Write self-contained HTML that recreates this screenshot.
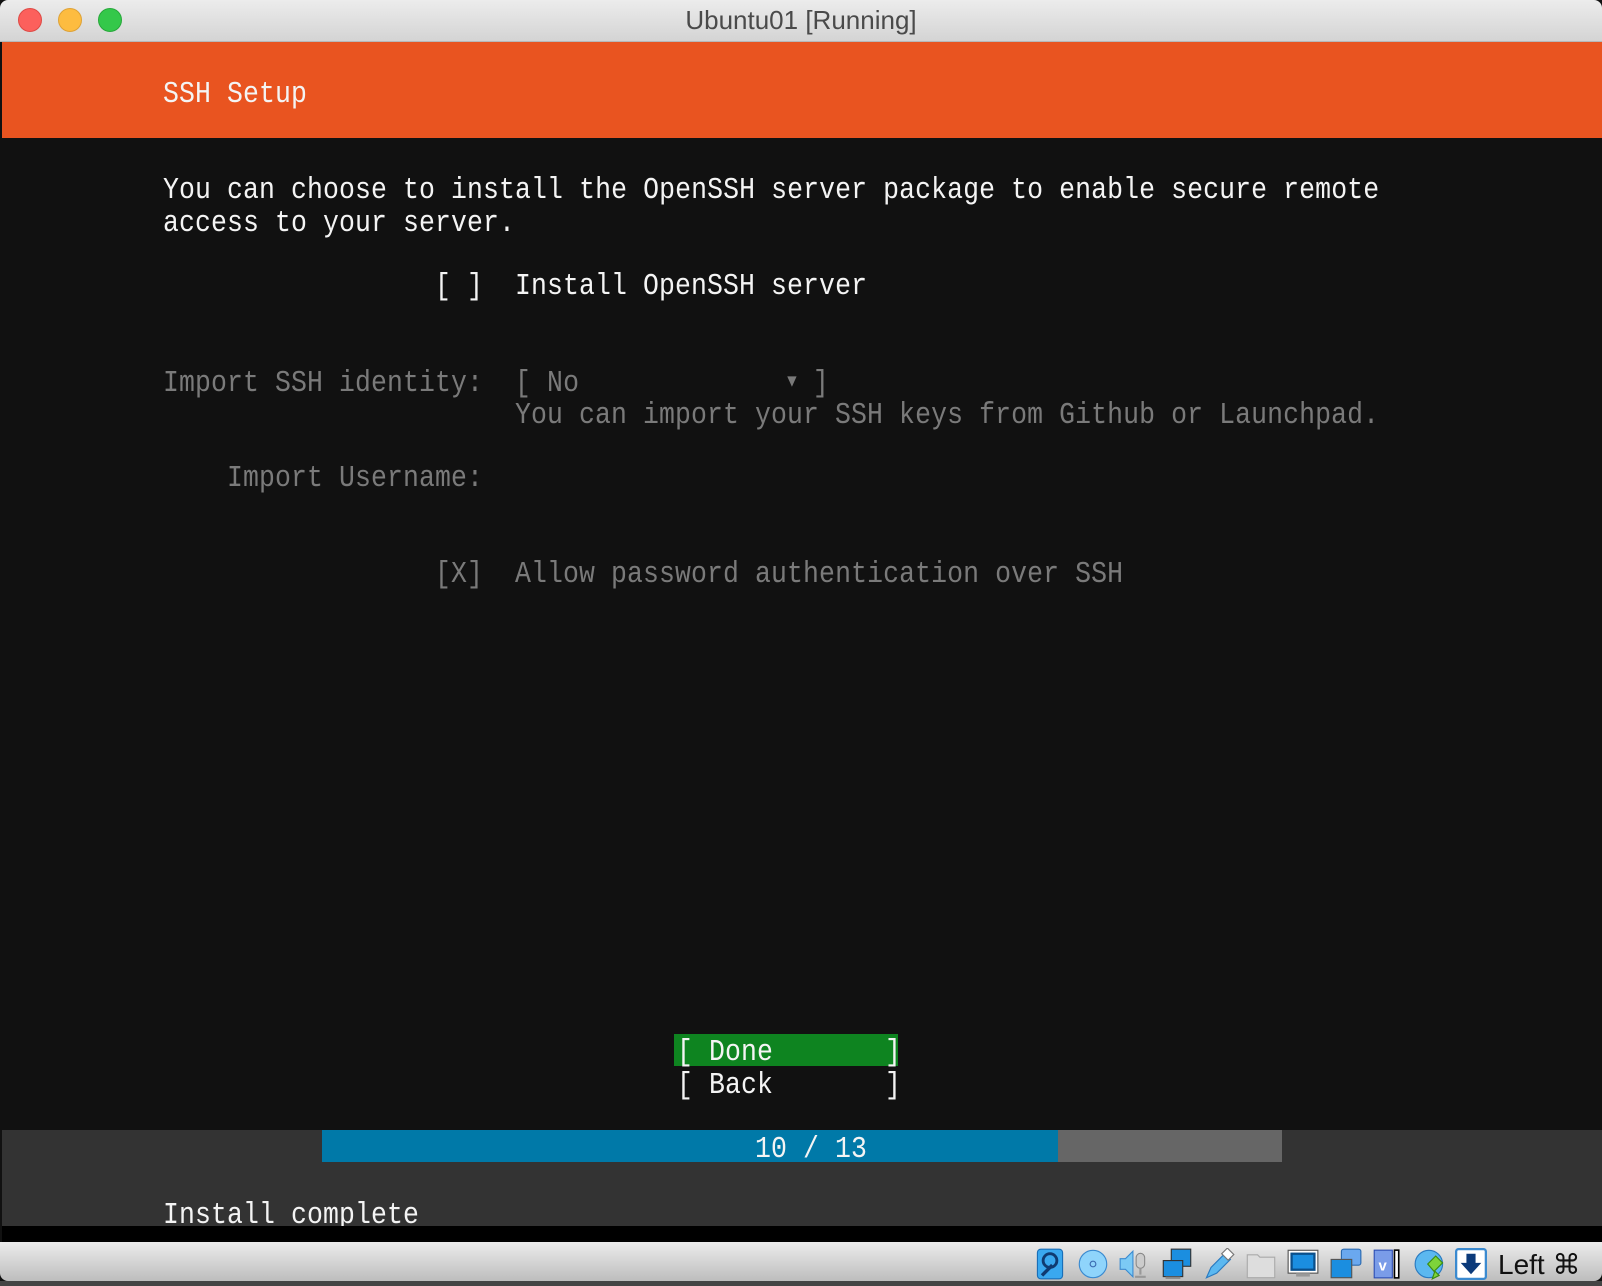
<!DOCTYPE html>
<html><head><meta charset="utf-8"><style>
*{margin:0;padding:0;box-sizing:border-box}
html,body{width:1602px;height:1286px;overflow:hidden;background:#fff}
#win{position:absolute;left:0;top:0;width:1602px;height:1286px;background:#111}
#title{position:absolute;left:0;top:0;width:1602px;height:42px;background:linear-gradient(#ececec,#d4d4d4);border-bottom:1px solid #b8b8b8;border-radius:8px 8px 0 0}
#title .t{position:absolute;left:0;width:1602px;top:5px;text-align:center;font:26px "Liberation Sans",sans-serif;color:#4a4a4a}
.dot{position:absolute;top:8px;width:24px;height:24px;border-radius:50%}
#orange{position:absolute;left:2px;top:42px;width:1600px;height:96px;background:#e95420}
.l{position:absolute;font-family:"Liberation Mono",monospace;font-size:26.5px;letter-spacing:0.1px;white-space:pre;line-height:32px;height:32px;transform:scaleY(1.15);color:#f4f4f4}
.g{color:#7a7a7a}
#bot{position:absolute;left:2px;top:1130px;width:1600px;height:96px;background:#333}
#blk{position:absolute;left:2px;top:1226px;width:1600px;height:16px;background:#000}
#status{position:absolute;left:0;top:1242px;width:1602px;height:39px;background:linear-gradient(#ececec,#bdbdbd);border-radius:0 0 8px 8px}
#strip{position:absolute;left:0;top:1281px;width:1602px;height:5px;background:#444}
.ic{position:absolute;top:1248px;width:32px;height:32px}
</style></head><body>
<div id="win">
<div id="title"><div class="t">Ubuntu01 [Running]</div>
<div class="dot" style="left:18px;background:#fc605c;border:1px solid #de4a45"></div>
<div class="dot" style="left:58px;background:#fdbc40;border:1px solid #dea236"></div>
<div class="dot" style="left:98px;background:#34c84a;border:1px solid #27a83a"></div>
</div>
<div id="orange"></div>
<div class="l" style="left:163px;top:78px">SSH Setup</div>
<div class="l" style="left:163px;top:174px">You can choose to install the OpenSSH server package to enable secure remote</div>
<div class="l" style="left:163px;top:207px">access to your server.</div>
<div class="l" style="left:435px;top:270px">[ ]  Install OpenSSH server</div>
<div class="l g" style="left:163px;top:366px">Import SSH identity:  [ No             <span style="font-size:16px;vertical-align:4px">▼</span> ]</div>
<div class="l g" style="left:515px;top:399px">You can import your SSH keys from Github or Launchpad.</div>
<div class="l g" style="left:227px;top:462px">Import Username:</div>
<div class="l g" style="left:435px;top:558px">[X]  Allow password authentication over SSH</div>
<div style="position:absolute;left:674px;top:1034px;width:224px;height:32px;background:#0e8420"></div>
<div class="l" style="left:677px;top:1036px">[ Done       ]</div>
<div class="l" style="left:677px;top:1069px">[ Back       ]</div>
<div id="bot"></div>
<div style="position:absolute;left:322px;top:1130px;width:736px;height:32px;background:#0079a8"></div>
<div style="position:absolute;left:1058px;top:1130px;width:224px;height:32px;background:#666"></div>
<div class="l" style="left:755px;top:1133px">10 / 13</div>
<div class="l" style="left:163px;top:1199px">Install complete</div>
<div id="blk"></div>
<div id="status"></div>
<div id="strip"></div>
<svg class="ic" style="left:1034px" viewBox="0 0 26 28"><rect x="2" y="1" width="22" height="26" rx="3" fill="#3aa8ef" stroke="#1a6fb8"/><circle cx="13" cy="11" r="6" fill="none" stroke="#103a70" stroke-width="2.5"/><path d="M6 24 L15 15" stroke="#103a70" stroke-width="3"/></svg>
<svg class="ic" style="left:1077px" viewBox="0 0 26 28"><circle cx="13" cy="14" r="12" fill="#8fd4fb" stroke="#3a8ad0"/><circle cx="13" cy="14" r="2.5" fill="none" stroke="#3a6ab0"/></svg>
<svg class="ic" style="left:1118px" viewBox="0 0 30 28"><path d="M2 9h5l7-7v24l-7-7H2z" fill="#7ccaf5" stroke="#3a8ad0"/><rect x="17" y="4" width="8" height="14" rx="4" fill="#ccc" stroke="#888"/><path d="M21 18v6M16 26h10" stroke="#999" stroke-width="2"/></svg>
<svg class="ic" style="left:1161px" viewBox="0 0 28 28"><rect x="9" y="1" width="17" height="15" fill="#1b8ee0" stroke="#333"/><rect x="2" y="11" width="17" height="14" fill="#1b8ee0" stroke="#333"/><rect x="4" y="25" width="13" height="2" fill="#888"/></svg>
<svg class="ic" style="left:1203px" viewBox="0 0 28 28"><path d="M3 26 L7 17 L19 5 L24 10 L12 22 Z" fill="#5bb8f0" stroke="#2a7ac0"/><rect x="18" y="2" width="8" height="7" transform="rotate(45 22 5)" fill="#fff" stroke="#777"/></svg>
<svg class="ic" style="left:1245px" viewBox="0 0 28 28"><path d="M2 6h9l2 2h13v18H2z" fill="#ddd" stroke="#aaa"/></svg>
<svg class="ic" style="left:1287px" viewBox="0 0 28 28"><rect x="1" y="2" width="26" height="20" fill="#fff" stroke="#555"/><rect x="4" y="5" width="20" height="14" fill="#1b8ee0" stroke="#0b4f8a" stroke-width="2"/><rect x="8" y="22" width="12" height="3" fill="#999"/></svg>
<svg class="ic" style="left:1330px" viewBox="0 0 28 28"><rect x="10" y="1" width="17" height="14" rx="2" fill="#6aa8ef" stroke="#2a6ab0"/><rect x="1" y="10" width="18" height="16" fill="#1b8ee0" stroke="#555"/></svg>
<svg class="ic" style="left:1371px" viewBox="0 0 30 28"><rect x="3" y="1" width="17" height="26" fill="#7a9ce8" stroke="#2a4ab0"/><text x="7" y="20" font-family="Liberation Sans" font-size="14" font-weight="bold" fill="#fff">v</text><rect x="22" y="1" width="4" height="26" fill="#fff" stroke="#000" stroke-width="1.5"/></svg>
<svg class="ic" style="left:1414px" viewBox="0 0 28 28"><circle cx="13" cy="14" r="12" fill="#5bb8f0" stroke="#2a7ac0"/><path d="M12 14l7-7 6 6-7 7 4 4-6 3 2-6z" fill="#7ed43a" stroke="#3a8a10"/></svg>
<svg class="ic" style="left:1455px" viewBox="0 0 28 28"><rect x="1" y="1" width="26" height="26" rx="2" fill="#fff" stroke="#3a8ad0" stroke-width="2"/><path d="M10 5h8v8h5l-9 10-9-10h5z" fill="#0b3a7a"/></svg>
<div style="position:absolute;left:1498px;top:1248px;font:28px 'Liberation Sans','DejaVu Sans',sans-serif;color:#111">Left ⌘</div>
</div>
</body></html>
